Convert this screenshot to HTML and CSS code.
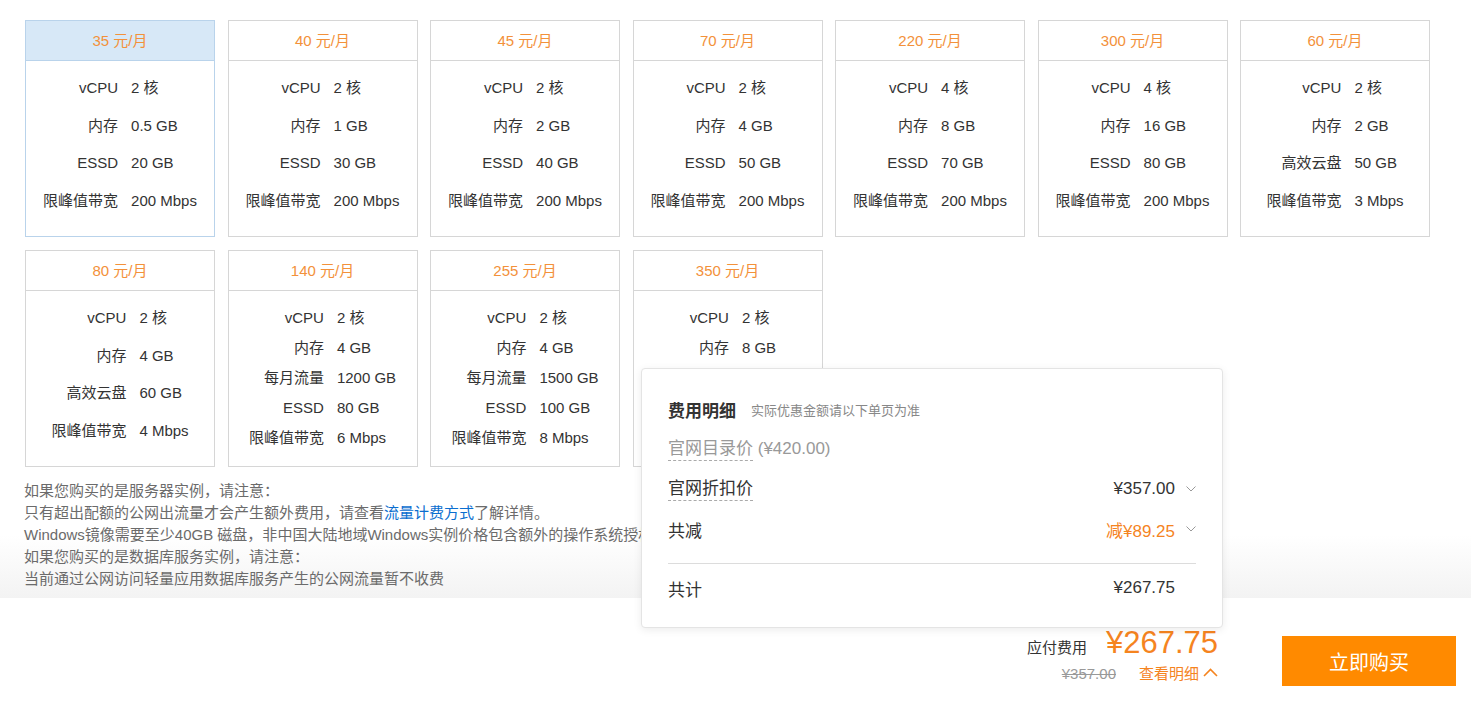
FILE: index.html
```html
<!DOCTYPE html>
<html lang="zh-CN">
<head>
<meta charset="utf-8">
<title>套餐选择</title>
<link rel="stylesheet" href="styles.css">
</head>
<body>
<main class="page">
  <section class="plans">
    <div class="plan-grid">
      <div class="plan is-selected">
        <div class="plan-price">35 元/月</div>
        <dl class="specs">
          <dt>vCPU</dt><dd>2 核</dd>
          <dt>内存</dt><dd>0.5 GB</dd>
          <dt>ESSD</dt><dd>20 GB</dd>
          <dt>限峰值带宽</dt><dd>200 Mbps</dd>
        </dl>
      </div>
      <div class="plan">
        <div class="plan-price">40 元/月</div>
        <dl class="specs">
          <dt>vCPU</dt><dd>2 核</dd>
          <dt>内存</dt><dd>1 GB</dd>
          <dt>ESSD</dt><dd>30 GB</dd>
          <dt>限峰值带宽</dt><dd>200 Mbps</dd>
        </dl>
      </div>
      <div class="plan">
        <div class="plan-price">45 元/月</div>
        <dl class="specs">
          <dt>vCPU</dt><dd>2 核</dd>
          <dt>内存</dt><dd>2 GB</dd>
          <dt>ESSD</dt><dd>40 GB</dd>
          <dt>限峰值带宽</dt><dd>200 Mbps</dd>
        </dl>
      </div>
      <div class="plan">
        <div class="plan-price">70 元/月</div>
        <dl class="specs">
          <dt>vCPU</dt><dd>2 核</dd>
          <dt>内存</dt><dd>4 GB</dd>
          <dt>ESSD</dt><dd>50 GB</dd>
          <dt>限峰值带宽</dt><dd>200 Mbps</dd>
        </dl>
      </div>
      <div class="plan">
        <div class="plan-price">220 元/月</div>
        <dl class="specs">
          <dt>vCPU</dt><dd>4 核</dd>
          <dt>内存</dt><dd>8 GB</dd>
          <dt>ESSD</dt><dd>70 GB</dd>
          <dt>限峰值带宽</dt><dd>200 Mbps</dd>
        </dl>
      </div>
      <div class="plan">
        <div class="plan-price">300 元/月</div>
        <dl class="specs">
          <dt>vCPU</dt><dd>4 核</dd>
          <dt>内存</dt><dd>16 GB</dd>
          <dt>ESSD</dt><dd>80 GB</dd>
          <dt>限峰值带宽</dt><dd>200 Mbps</dd>
        </dl>
      </div>
      <div class="plan">
        <div class="plan-price">60 元/月</div>
        <dl class="specs">
          <dt>vCPU</dt><dd>2 核</dd>
          <dt>内存</dt><dd>2 GB</dd>
          <dt>高效云盘</dt><dd>50 GB</dd>
          <dt>限峰值带宽</dt><dd>3 Mbps</dd>
        </dl>
      </div>
      <div class="plan">
        <div class="plan-price">80 元/月</div>
        <dl class="specs">
          <dt>vCPU</dt><dd>2 核</dd>
          <dt>内存</dt><dd>4 GB</dd>
          <dt>高效云盘</dt><dd>60 GB</dd>
          <dt>限峰值带宽</dt><dd>4 Mbps</dd>
        </dl>
      </div>
      <div class="plan">
        <div class="plan-price">140 元/月</div>
        <dl class="specs specs-dense">
          <dt>vCPU</dt><dd>2 核</dd>
          <dt>内存</dt><dd>4 GB</dd>
          <dt>每月流量</dt><dd>1200 GB</dd>
          <dt>ESSD</dt><dd>80 GB</dd>
          <dt>限峰值带宽</dt><dd>6 Mbps</dd>
        </dl>
      </div>
      <div class="plan">
        <div class="plan-price">255 元/月</div>
        <dl class="specs specs-dense">
          <dt>vCPU</dt><dd>2 核</dd>
          <dt>内存</dt><dd>4 GB</dd>
          <dt>每月流量</dt><dd>1500 GB</dd>
          <dt>ESSD</dt><dd>100 GB</dd>
          <dt>限峰值带宽</dt><dd>8 Mbps</dd>
        </dl>
      </div>
      <div class="plan">
        <div class="plan-price">350 元/月</div>
        <dl class="specs specs-dense">
          <dt>vCPU</dt><dd>2 核</dd>
          <dt>内存</dt><dd>8 GB</dd>
          <dt>每月流量</dt><dd>2000 GB</dd>
          <dt>ESSD</dt><dd>120 GB</dd>
          <dt>限峰值带宽</dt><dd>10 Mbps</dd>
        </dl>
      </div>
    </div>
    <div class="notes">
      <p>如果您购买的是服务器实例，请注意：</p>
      <p>只有超出配额的公网出流量才会产生额外费用，请查看<a class="notes-link" href="#">流量计费方式</a>了解详情。</p>
      <p>Windows镜像需要至少40GB 磁盘，非中国大陆地域Windows实例价格包含额外的操作系统授权费用。</p>
      <p>如果您购买的是数据库服务实例，请注意：</p>
      <p>当前通过公网访问轻量应用数据库服务产生的公网流量暂不收费</p>
    </div>
  </section>
  <footer class="buybar">
    <div class="cost">
      <div class="cost-main">
        <span class="cost-label">应付费用</span>
        <span class="cost-amount">¥267.75</span>
      </div>
      <div class="cost-sub">
        <span class="cost-orig">¥357.00</span>
        <a class="cost-detail" href="#">查看明细<svg class="chev-up" width="15" height="9" viewBox="0 0 15 9"><polyline points="1,8 7.5,1.5 14,8" fill="none" stroke="currentColor" stroke-width="1.6"/></svg></a>
      </div>
    </div>
    <button class="buy-btn" type="button">立即购买</button>
  </footer>
</main>

<div class="fee-pop">
  <div class="fee-head">
    <span class="fee-title">费用明细</span>
    <span class="fee-sub">实际优惠金额请以下单页为准</span>
  </div>
  <div class="fee-row fee-row-muted">
    <span class="fee-dashed">官网目录价</span>&nbsp;(¥420.00)
  </div>
  <div class="fee-row">
    <span class="fee-dashed">官网折扣价</span>
    <span class="fee-val">¥357.00<svg class="chev-down" width="10" height="6" viewBox="0 0 10 6"><polyline points="0.5,0.5 5,5 9.5,0.5" fill="none" stroke="#999" stroke-width="1"/></svg></span>
  </div>
  <div class="fee-row">
    <span>共减</span>
    <span class="fee-val fee-discount">减¥89.25<svg class="chev-down" width="10" height="6" viewBox="0 0 10 6"><polyline points="0.5,0.5 5,5 9.5,0.5" fill="none" stroke="#999" stroke-width="1"/></svg></span>
  </div>
  <div class="fee-divider"></div>
  <div class="fee-row fee-total">
    <span>共计</span>
    <span class="fee-val fee-val-plain">¥267.75</span>
  </div>
</div>
</body>
</html>
```

FILE: styles.css
```css
* {
  box-sizing: border-box;
}

html, body {
  margin: 0;
  padding: 0;
  background: #fff;
}

body {
  font-family: "Liberation Sans", "Noto Sans CJK SC", sans-serif;
  color: #333;
  width: 1471px;
  height: 707px;
  overflow: hidden;
  position: relative;
}

.page {
  display: flex;
  flex-direction: column;
  height: 707px;
}

.plans {
  padding-top: 20px;
  height: 598px;
  display: flex;
  flex-direction: column;
}

.plan-grid {
  display: grid;
  grid-template-columns: repeat(7, 190px);
  grid-auto-rows: 217px;
  column-gap: 12.5px;
  row-gap: 13px;
  margin-left: 25px;
}

.plan {
  border: 1px solid #d6d6d6;
  background: #fff;
  display: flex;
  flex-direction: column;
}

.plan-price {
  height: 40px;
  line-height: 39px;
  border-bottom: 1px solid #d6d6d6;
  text-align: center;
  font-size: 15px;
  color: #f3913a;
}

.plan.is-selected {
  border-color: #b9d3eb;
}

.plan.is-selected .plan-price {
  background: #d7e8f7;
  border-bottom-color: #b9d3eb;
}

.specs {
  margin: 0;
  padding-top: 8px;
  display: grid;
  grid-template-columns: auto auto;
  grid-auto-rows: 37.7px;
  justify-content: center;
  column-gap: 13px;
  font-size: 15px;
  line-height: 37.7px;
}

.specs-dense {
  padding-top: 12px;
  grid-auto-rows: 30px;
  line-height: 30px;
}

.specs dt {
  text-align: right;
  color: #333;
}

.specs dd {
  margin: 0;
  text-align: left;
  color: #333;
}

.notes {
  flex: 1;
  padding: 13px 0 0 24px;
  background: linear-gradient(180deg, #fff 0%, #fff 52%, #f3f3f3 100%);
  font-size: 15px;
  line-height: 22px;
  color: #6b6b6b;
  white-space: nowrap;
}

.notes p {
  margin: 0;
}

.notes-link {
  color: #0a6ecf;
  text-decoration: none;
}

.buybar {
  height: 109px;
  display: flex;
  justify-content: flex-end;
  align-items: flex-start;
  padding-right: 15px;
  background: #fff;
}

.cost {
  margin-top: 26px;
  display: flex;
  flex-direction: column;
  align-items: flex-end;
}

.cost-main {
  display: flex;
  align-items: baseline;
  gap: 19px;
  height: 38px;
}

.cost-label {
  font-size: 15px;
  color: #333;
}

.cost-amount {
  font-size: 31px;
  line-height: 38px;
  color: #f5841f;
}

.cost-sub {
  margin-top: 2px;
  display: flex;
  align-items: center;
  gap: 23px;
  line-height: 20px;
}

.cost-orig {
  font-size: 15px;
  color: #999;
  text-decoration: line-through;
}

.cost-detail {
  font-size: 15px;
  color: #f5841f;
  text-decoration: none;
  display: flex;
  align-items: center;
  gap: 4px;
}

.chev-up {
  display: block;
  margin-top: -3px;
}

.buy-btn {
  margin-top: 38px;
  margin-left: 64px;
  width: 174px;
  height: 50px;
  border: 0;
  background: #ff8a00;
  color: #fff;
  font-family: "Liberation Sans", "Noto Sans CJK SC", sans-serif;
  font-size: 20px;
  cursor: pointer;
}

/* popover */
.fee-pop {
  position: absolute;
  left: 641px;
  top: 368px;
  width: 582px;
  height: 260px;
  padding: 27px 26px 0 26px;
  background: #fff;
  border: 1px solid #e4e4e4;
  border-radius: 4px;
  box-shadow: 0 2px 8px rgba(0, 0, 0, 0.08);
}

.fee-head {
  height: 26px;
  display: flex;
  align-items: center;
  gap: 15px;
  margin-bottom: 7px;
}

.fee-title {
  font-size: 17px;
  font-weight: bold;
  color: #333;
}

.fee-sub {
  font-size: 13px;
  color: #888;
}

.fee-row {
  height: 40px;
  display: flex;
  align-items: center;
  justify-content: space-between;
  font-size: 17px;
  color: #333;
}

.fee-row-muted {
  justify-content: flex-start;
  color: #999;
}

.fee-dashed {
  display: inline-block;
  line-height: 22px;
  border-bottom: 1px dashed #aaa;
}

.fee-val {
  display: flex;
  align-items: center;
  gap: 11px;
}

.fee-val-plain {
  padding-right: 21px;
}

.fee-discount {
  color: #f5841f;
}

.chev-down {
  display: block;
}

.fee-divider {
  margin-top: 14px;
  height: 1px;
  background: #dcdcdc;
}

.fee-total {
  height: 48px;
}
```
